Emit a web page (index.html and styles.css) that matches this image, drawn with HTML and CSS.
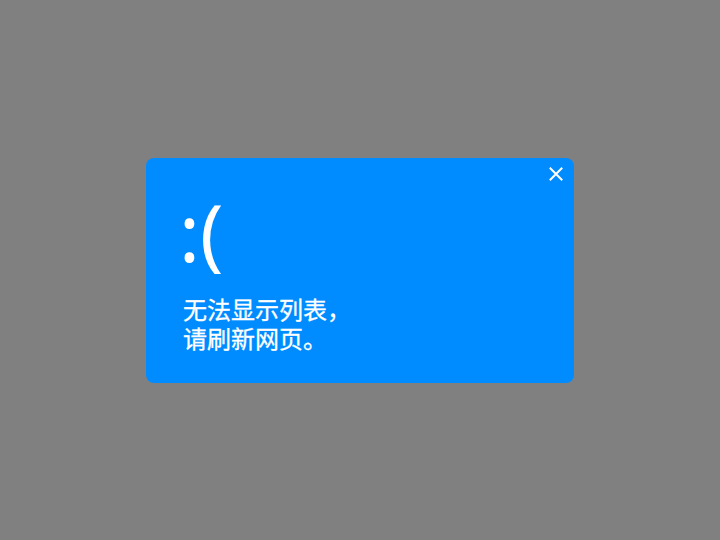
FILE: index.html
```html
<!DOCTYPE html>
<html lang="zh">
<head>
<meta charset="utf-8">
<link rel="stylesheet" href="styles.css">
</head>
<body>
<div class="stage">
  <div class="card">
    <button class="close" aria-label="关闭">
      <svg width="14" height="14" viewBox="0 0 14 14"><path d="M1.5 1.5L12.5 12.5M12.5 1.5L1.5 12.5" stroke="#fff" stroke-width="2" stroke-linecap="square" fill="none"/></svg>
    </button>
    <div class="face">:(</div>
    <p class="msg">无法显示列表，<br>请刷新网页。</p>
  </div>
</div>
</body>
</html>
```
FILE: styles.css
```css
html, body {
  margin: 0;
  padding: 0;
  height: 100%;
}
body {
  background: #808080;
  font-family: "Noto Sans", "Noto Sans CJK SC", sans-serif;
}
.stage {
  height: 100%;
  display: flex;
  align-items: center;
  justify-content: center;
}
.card {
  position: relative;
  width: 428px;
  height: 225px;
  box-sizing: border-box;
  background: #008cff;
  border-radius: 8px;
  padding: 34px 36px 0 37px;
  color: #fff;
}
.close {
  position: absolute;
  top: 9px;
  right: 11px;
  width: 14px;
  height: 14px;
  padding: 0;
  border: 0;
  background: none;
  display: flex;
}
.face {
  margin-left: -4px;
  font-family: "Noto Sans", sans-serif;
  font-size: 78px;
  font-weight: 400;
  line-height: 80px;
  height: 80px;
}
.msg {
  margin: 22px 0 0 0;
  font-family: "Noto Sans CJK SC", sans-serif;
  font-size: 24px;
  line-height: 29px;
  -webkit-text-stroke: 0.3px #fff;
}
```
